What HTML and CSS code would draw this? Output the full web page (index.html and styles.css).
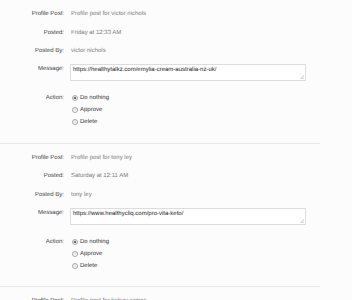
FILE: index.html
```html
<!DOCTYPE html>
<html>
<head>
<meta charset="utf-8">
<link rel="stylesheet" href="styles.css">
</head>
<body>
<div class="list">
  <div class="item">
    <div class="row"><div class="label">Profile Post:</div><div class="value">Profile post for victor nichols</div></div>
    <div class="row"><div class="label">Posted:</div><div class="value">Friday at 12:33 AM</div></div>
    <div class="row"><div class="label">Posted By:</div><div class="value">victor nichols</div></div>
    <div class="row msg"><div class="label">Message:</div>
      <div class="ta"><div class="ta-text">https://healthytalkz.com/emylia-cream-australia-nz-uk/</div>
        <svg class="grip" width="4" height="4" viewBox="0 0 4 4"><path d="M0.5 4L4 0.5M2.5 4L4 2.5" stroke="#999" stroke-width="0.6"/></svg>
      </div>
    </div>
    <div class="row action"><div class="label">Action:</div>
      <div class="opts">
        <div class="opt"><span class="radio on"></span>Do nothing</div>
        <div class="opt"><span class="radio"></span>Approve</div>
        <div class="opt"><span class="radio"></span>Delete</div>
      </div>
    </div>
  </div>
  <div class="item">
    <div class="row"><div class="label">Profile Post:</div><div class="value">Profile post for tony ley</div></div>
    <div class="row"><div class="label">Posted:</div><div class="value">Saturday at 12:11 AM</div></div>
    <div class="row"><div class="label">Posted By:</div><div class="value">tony ley</div></div>
    <div class="row msg"><div class="label">Message:</div>
      <div class="ta"><div class="ta-text">https://www.healthycliq.com/pro-vita-keto/</div>
        <svg class="grip" width="4" height="4" viewBox="0 0 4 4"><path d="M0.5 4L4 0.5M2.5 4L4 2.5" stroke="#999" stroke-width="0.6"/></svg>
      </div>
    </div>
    <div class="row action"><div class="label">Action:</div>
      <div class="opts">
        <div class="opt"><span class="radio on"></span>Do nothing</div>
        <div class="opt"><span class="radio"></span>Approve</div>
        <div class="opt"><span class="radio"></span>Delete</div>
      </div>
    </div>
  </div>
  <div class="item">
    <div class="row"><div class="label">Profile Post:</div><div class="value">Profile post for kelsey ramos</div></div>
  </div>
</div>
</body>
</html>
```
FILE: styles.css
```css
html, body {
  margin: 0;
  padding: 0;
  background: #fcfcfd;
  font-family: "Liberation Sans", Arial, sans-serif;
  font-size: 6px;
  line-height: 8px;
  text-rendering: geometricPrecision;
}
.list {
  width: 320px;
}
.item {
  padding: 5px 0 14.5px;
  border-bottom: 1px solid #e8e8ea;
}
.row {
  display: grid;
  grid-template-columns: 64px 1fr;
  column-gap: 7px;
  padding: 5.25px 0;
}
.label {
  text-align: right;
  color: #444;
}
.value {
  color: #7a7a7a;
}
.msg {
  padding: 3.5px 0;
  column-gap: 6px;
}
.msg .label {
  padding-top: 1px;
}
.ta {
  position: relative;
  width: 234px;
  height: 15px;
  border: 1px solid #dcdcdf;
  background: #fff;
}
.ta-text {
  padding: 1px 2px;
  color: #222;
  white-space: nowrap;
}
.grip {
  position: absolute;
  right: 1px;
  bottom: 1px;
}
.action {
  padding: 7.5px 0 0;
}
.action .label {
  line-height: 12px;
}
.opts {
  display: flex;
  flex-direction: column;
  padding-left: 1px;
}
.opt {
  display: flex;
  align-items: center;
  height: 12px;
  color: #333;
}
.radio {
  width: 4px;
  height: 4px;
  border: 0.5px solid #aaa;
  border-radius: 50%;
  background: linear-gradient(#e6e6e6, #f8f8f8);
  margin-right: 2px;
  position: relative;
}
.radio.on::after {
  content: "";
  position: absolute;
  left: 1px;
  top: 1px;
  width: 2px;
  height: 2px;
  border-radius: 50%;
  background: #333;
}
```
